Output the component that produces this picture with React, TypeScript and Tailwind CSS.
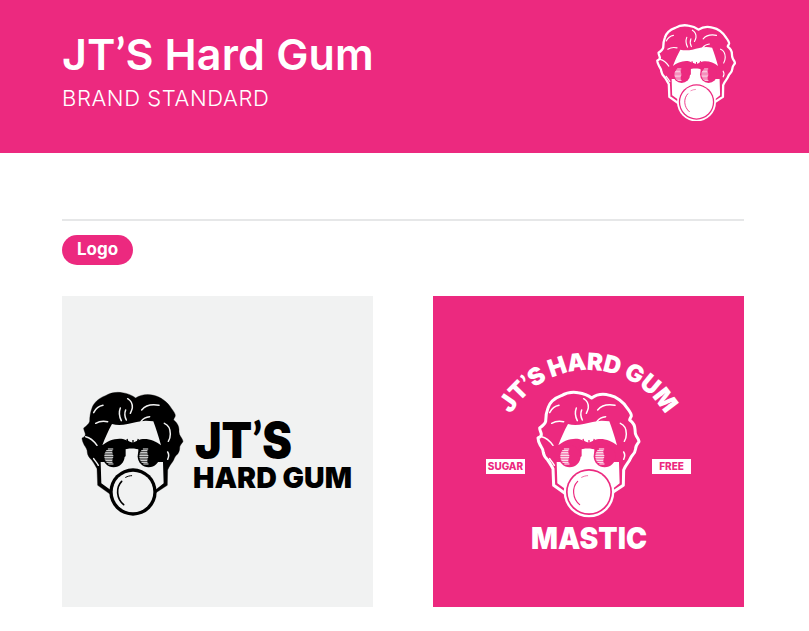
const PINK = "#ec297f";

const HAIR =
  "M45 60 C50 44 66 30 85 23 C100 14 118 11 136 14 C152 16 166 22 176 30 C190 20 212 17 230 22 C250 26 272 42 284 62 C290 70 296 78 295 84 C293 90 290 92 290 96 C298 102 306 112 306 124 C306 132 306 138 310 144 C314 150 318 156 318 161 C313 168 307 174 308 182 C307 190 305 196 298 202 C292 208 292 214 287 221 C282 228 276 236 272 246 L271 292 L228 320 L104 322 L62 292 L60 242 C54 232 50 224 44 216 C36 208 32 202 31 194 C31 184 26 178 22 172 C18 164 15 156 15 150 C20 148 26 144 25 138 C23 130 20 126 20 120 C28 114 36 108 38 100 C38 88 40 72 45 60 Z";
const FOREHEAD =
  "M76 172 C84 150 94 128 105 108 C120 112 136 111 152 108 C170 104 188 99 206 98 C214 98 222 99 229 100 C237 122 245 146 252 172 C236 158 212 150 192 154 C182 156 176 162 168 164 C158 162 150 156 138 153 C116 149 92 158 76 172 Z";
const FACE =
  "M71 222 L110 222 L146 205 L146 178 L184 178 L184 205 L215 222 L258 222 L260 286 L232 308 L104 308 L73 286 Z";
const STRANDS = [
  "M50 74 C56 62 66 54 78 52",
  "M56 106 C66 100 78 98 92 101",
  "M152 32 C162 38 167 48 166 60 C165 66 163 70 160 76",
  "M130 60 C126 70 126 84 133 98",
  "M146 66 C142 76 143 86 148 96",
  "M194 66 C204 54 224 48 246 52",
  "M192 100 C198 92 206 87 218 86",
  "M262 106 C272 110 280 122 280 138 C280 146 278 154 274 160",
  "M26 146 C36 148 50 158 60 172",
  "M50 212 C54 218 60 224 64 232",
  "M272 192 C276 198 276 206 272 214",
];
const STRIPES = [-22, -17, -12, -7, -2, 3, 8, 13, 18, 23];

function Head({ dark, light, ring }: { dark: string; light: string; ring?: boolean }) {
  return (
    <g>
      <path d={HAIR} fill={dark} stroke={ring ? light : dark} strokeWidth={ring ? 9 : 1} strokeLinejoin="round" />
      {STRANDS.map((d) => (
        <path key={d} d={d} fill="none" stroke={light} strokeWidth="4.5" strokeLinecap="round" />
      ))}
      <path d={FOREHEAD} fill={light} />
      <path d={FACE} fill={light} />
      <circle cx="110" cy="205" r="33" fill={dark} />
      <circle cx="215" cy="205" r="33" fill={dark} />
      <path d="M136 176 C150 168 178 168 192 176 L190 186 C176 180 152 180 138 186 Z" fill={dark} />
      <path d="M150 153 L154 166 M168 156 L168 168 M184 153 L180 166" stroke={dark} strokeWidth="4" fill="none" />
      {STRIPES.map((d) => {
        const chord = Math.sqrt(28 * 28 - d * d);
        const len = 28 - Math.abs(d) * 0.55;
        return (
          <g key={d} stroke={light} strokeWidth="3">
            <line x1={110 - chord} y1={205 + d} x2={110 - chord + len} y2={205 + d} />
            <line x1={215 - chord} y1={205 + d} x2={215 - chord + len} y2={205 + d} />
          </g>
        );
      })}
      <circle cx="168" cy="312" r={ring ? 76 : 71} fill={ring ? light : dark} />
      {ring && <circle cx="168" cy="312" r="69" fill={dark} />}
      <circle cx="168" cy="312" r={ring ? 64 : 61} fill={light} />
      <path d="M134 280 C116 298 118 332 140 350" fill="none" stroke={dark} strokeWidth={ring ? 3.5 : 5} strokeLinecap="round" />
      <path d="M146 268 C152 265 158 263 164 263" fill="none" stroke={dark} strokeWidth={ring ? 2 : 3} strokeLinecap="round" />
    </g>
  );
}

function BlackLogo() {
  return (
    <svg viewBox="0 0 311 311" className="w-full h-full">
      <g transform="translate(15 92) scale(0.3333)">
        <Head dark="#000000" light="#f1f2f2" />
      </g>
      <text x="133" y="162" fontSize="50" fontWeight="900" fill="#000" textLength="97" lengthAdjust="spacingAndGlyphs">
        JT<tspan fontFamily="Lato">’</tspan>S
      </text>
      <text x="131" y="192" fontSize="29" fontWeight="900" fill="#000" textLength="159" lengthAdjust="spacingAndGlyphs">
        HARD GUM
      </text>
    </svg>
  );
}

function PinkLogo() {
  return (
    <svg viewBox="0 0 311 311" className="w-full h-full">
      <g transform="translate(100 92) scale(0.3333)">
        <Head dark={PINK} light="#ffffff" ring />
      </g>
      <path id="arc" d="M66 163 A89 89 0 0 1 244 163" fill="none" />
      <text fontSize="24" fontWeight="900" fill="#fff" letterSpacing="-0.4">
        <textPath href="#arc" startOffset="50%" textAnchor="middle">
          JT<tspan fontFamily="Lato">’</tspan>S HARD GUM
        </textPath>
      </text>
      <rect x="53" y="163" width="39" height="15" fill="#fff" />
      <text x="72.5" y="174" fontSize="10" fontWeight="800" fill={PINK} textAnchor="middle">
        SUGAR
      </text>
      <rect x="219" y="163" width="39" height="15" fill="#fff" />
      <text x="238.5" y="174" fontSize="10" fontWeight="800" fill={PINK} textAnchor="middle">
        FREE
      </text>
      <text x="156" y="253" fontSize="30" fontWeight="900" fill="#fff" textAnchor="middle" textLength="116" lengthAdjust="spacingAndGlyphs">
        MASTIC
      </text>
    </svg>
  );
}

export default function App() {
  return (
    <div className="min-h-[631px] bg-white font-['Inter']">
      <header className="h-[153px] bg-[#ec297f] flex items-center justify-between pl-[62px] pr-[73px] text-white">
        <div className="-mt-[14px]">
          <h1 className="text-[43px] leading-[52px] font-semibold tracking-[0.2px]">
            JT<span className="font-['Lato'] font-bold">’</span>S Hard Gum
          </h1>
          <p className="text-[22px] leading-[28px] font-light mt-[4px] tracking-[0.6px]">BRAND STANDARD</p>
        </div>
        <svg viewBox="10 8 312 378" className="w-[80px] h-[97px] -mt-[8px]">
          <Head dark={PINK} light="#ffffff" ring />
        </svg>
      </header>
      <main className="px-[62px] pt-[66px] pb-[24px] w-[806px]">
        <div className="h-[2px] bg-[#e6e7e8]" />
        <div className="mt-[14px] h-[30px] w-[71px] rounded-full bg-[#ec297f] text-white text-[17px] font-bold flex items-center justify-center">
          Logo
        </div>
        <div className="mt-[31px] grid grid-cols-[311px_311px] gap-x-[60px]">
          <div className="h-[311px] bg-[#f1f2f2]">
            <BlackLogo />
          </div>
          <div className="h-[311px] bg-[#ec297f]">
            <PinkLogo />
          </div>
        </div>
      </main>
    </div>
  );
}
